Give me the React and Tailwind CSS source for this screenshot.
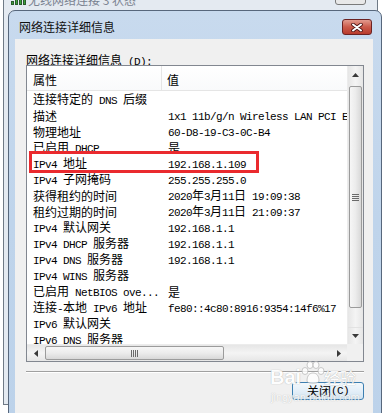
import React from "react";

const CJK = /[\u3000-\u303f\u4e00-\u9fff\uff00-\uffef]/;

function Mixed({ s }) {
  const parts = [];
  let cur = "";
  let curC = null;
  for (const ch of s) {
    const c = CJK.test(ch);
    if (curC === null || c === curC) {
      cur += ch;
      curC = c;
    } else {
      parts.push([cur, curC]);
      cur = ch;
      curC = c;
    }
  }
  if (cur) parts.push([cur, curC]);
  return parts.map(([t, c], i) =>
    c ? (
      <span key={i} className="text-[12px] leading-[14px] align-baseline">{t}</span>
    ) : (
      <span
        key={i}
        className="font-['Liberation_Mono',monospace] text-[11px] leading-[14px] tracking-[-0.6px] whitespace-pre align-baseline"
      >
        {t}
      </span>
    )
  );
}

const rows = [
  ["连接特定的 DNS 后缀", ""],
  ["描述", "1x1 11b/g/n Wireless LAN PCI Express Half Mini Card Adapter"],
  ["物理地址", "60-D8-19-C3-0C-B4"],
  ["已启用 DHCP", "是"],
  ["IPv4 地址", "192.168.1.109"],
  ["IPv4 子网掩码", "255.255.255.0"],
  ["获得租约的时间", "2020年3月11日 19:09:38"],
  ["租约过期的时间", "2020年3月11日 21:09:37"],
  ["IPv4 默认网关", "192.168.1.1"],
  ["IPv4 DHCP 服务器", "192.168.1.1"],
  ["IPv4 DNS 服务器", "192.168.1.1"],
  ["IPv4 WINS 服务器", ""],
  ["已启用 NetBIOS ove...", "是"],
  ["连接-本地 IPv6 地址", "fe80::4c80:8916:9354:14f6%17"],
  ["IPv6 默认网关", ""],
  ["IPv6 DNS 服务器", ""],
];

function Arrow({ dir }) {
  const pts = {
    up: "0,4 3.5,0 7,4",
    down: "0,0 3.5,4 7,0",
    left: "4,0 0,3.5 4,7",
    right: "0,0 4,3.5 0,7",
  }[dir];
  const w = dir === "up" || dir === "down" ? 7 : 4;
  const h = dir === "up" || dir === "down" ? 4 : 7;
  return (
    <svg width={w} height={h} viewBox={`0 0 ${w} ${h}`}>
      <polygon points={pts} fill="#3a3a3a" />
    </svg>
  );
}

function VScroll() {
  return (
    <div className="flex flex-col w-[16px] h-full bg-gradient-to-r from-[#e6e6e6] via-[#f4f4f4] to-[#e6e6e6] border-l border-[#ececec]">
      <div className="h-[17px] flex items-center justify-center">
        <Arrow dir="up" />
      </div>
      <div className="mt-[3px] h-[222px] mx-[1px] rounded-[2px] border border-[#9b9b9b] bg-gradient-to-r from-[#f6f6f6] via-[#ececec] to-[#d8d8d8] flex flex-col items-center justify-center gap-[1px]">
        <div className="w-[7px] h-[1px] bg-[#6a6a6a]" />
        <div className="w-[7px] h-[1px] bg-[#6a6a6a]" />
        <div className="w-[7px] h-[1px] bg-[#6a6a6a]" />
        <div className="w-[7px] h-[1px] bg-[#6a6a6a]" />
      </div>
      <div className="flex-1" />
      <div className="h-[17px] flex items-center justify-center border-t border-[#e2e2e2]">
        <Arrow dir="down" />
      </div>
    </div>
  );
}

function HScroll() {
  return (
    <div className="flex h-[17px] w-full bg-gradient-to-b from-[#e6e6e6] via-[#f4f4f4] to-[#e6e6e6] border-t border-[#ececec]">
      <div className="w-[17px] flex items-center justify-center">
        <Arrow dir="left" />
      </div>
      <div className="ml-[1px] my-[1px] w-[179px] rounded-[2px] border border-[#9b9b9b] bg-gradient-to-b from-[#f6f6f6] via-[#ececec] to-[#d8d8d8] flex items-center justify-center gap-[1px]">
        <div className="w-[1px] h-[7px] bg-[#6a6a6a]" />
        <div className="w-[1px] h-[7px] bg-[#6a6a6a]" />
        <div className="w-[1px] h-[7px] bg-[#6a6a6a]" />
        <div className="w-[1px] h-[7px] bg-[#6a6a6a]" />
      </div>
      <div className="flex-1" />
      <div className="w-[17px] flex items-center justify-center">
        <Arrow dir="right" />
      </div>
    </div>
  );
}

export default function App() {
  return (
    <div className="relative w-[387px] h-[413px] overflow-hidden bg-white font-['Noto_Sans_CJK_SC',sans-serif] text-black">
      {/* back window */}
      <div className="absolute left-[3px] top-[-30px] w-[375px] h-[435px] border border-[#6f7a86] bg-[#e4eaf1]">
        <div className="absolute left-[7px] top-[22px] flex items-end gap-[1px] h-[12px]">
          <div className="w-[3px] h-[4px] bg-[#3aa33a] border border-[#2b5a2b]" />
          <div className="w-[3px] h-[6px] bg-[#3aa33a] border border-[#2b5a2b]" />
          <div className="w-[3px] h-[8px] bg-[#3aa33a] border border-[#2b5a2b]" />
          <div className="w-[3px] h-[10px] bg-[#3aa33a] border border-[#2b5a2b]" />
        </div>
        <div className="absolute left-[24px] top-[21px] text-[12px] leading-[16px] text-[#7a8290]">
          无线网络连接 3 状态
        </div>
        <div className="absolute left-[331px] top-[18px] w-[31px] h-[16px] rounded-[3px] border border-[#7a7a7a] bg-[#e8e8e8]" />
      </div>

      {/* dialog */}
      <div className="absolute left-[8px] top-[10px] w-[374px] h-[420px] rounded-t-[7px] border border-[#57677c] bg-gradient-to-b from-[#c8daee] via-[#bfd4eb] to-[#bcd2ea] flex flex-col">
        {/* title bar */}
        <div className="h-[28px] pt-[4px] flex items-center pl-[10px] pr-[9px]">
          <div className="flex-1 text-[12px] leading-[16px] text-[#111]">网络连接详细信息</div>
          <div className="w-[30px] h-[16px] rounded-[3px] border border-[#6b2222] bg-gradient-to-b from-[#e29a8e] via-[#cb5a4a] to-[#b83a2c] flex items-center justify-center">
            <svg width="12" height="9" viewBox="0 0 12 9">
              <path d="M2 1.5 L10 7.5 M10 1.5 L2 7.5" stroke="#4a1212" strokeWidth="3.6" strokeLinecap="round" />
              <path d="M2 1.5 L10 7.5 M10 1.5 L2 7.5" stroke="#ffffff" strokeWidth="2" strokeLinecap="round" />
            </svg>
          </div>
        </div>

        {/* client area */}
        <div className="flex-1 ml-[6px] mr-[8px] bg-[#f0f0f0] pl-[11px] pr-[9px] pt-[12px] flex flex-col">
          <div className="leading-[14px] h-[14px] whitespace-nowrap">
            <Mixed s="网络连接详细信息 (D):" />
          </div>

          {/* list box */}
          <div className="relative h-[297px] border border-[#828790] bg-white flex">
            <div className="w-[320px] flex flex-col">
              <div className="h-[25px] flex border-b border-[#e5e5e5] bg-gradient-to-b from-white to-[#f9fafb] text-[12px] leading-[16px]">
                <div className="w-[135px] pl-[6px] pt-[6px] border-r border-[#e5e5e5]">属性</div>
                <div className="pl-[5px] pt-[6px]">值</div>
              </div>
              <div className="flex-1 overflow-hidden">
                {rows.map(([k, v], i) => (
                  <div key={i} className="flex h-[16px] leading-[16px] whitespace-nowrap items-center">
                    <div className="w-[135px] pl-[6px] overflow-hidden leading-[14px]">
                      <Mixed s={k} />
                    </div>
                    <div className="pl-[6px] flex-1 overflow-hidden leading-[14px]">
                      <Mixed s={v} />
                    </div>
                  </div>
                ))}
              </div>
              <HScroll />
            </div>
            <div className="w-[16px] flex flex-col">
              <div className="flex-1">
                <VScroll />
              </div>
              <div className="h-[17px] bg-[#f0f0f0]" />
            </div>

            {/* red annotation */}
            <div className="absolute left-[2px] top-[85px] w-[230px] h-[22px] border-[3px] border-[#ea2a2e]" />
          </div>

          {/* separator */}
          <div className="mt-[9px] h-[1px] bg-[#a0a0a0]" />
          <div className="h-[1px] bg-white" />

          {/* button row */}
          <div className="mt-[9px] flex justify-end">
            <div className="w-[72px] h-[18px] rounded-[3px] border border-[#3c7fb1] bg-gradient-to-b from-[#f2f8fc] via-[#e4eff8] to-[#d2e4f2] flex items-center justify-center leading-[14px]">
              <Mixed s="关闭(C)" />
            </div>
          </div>
        </div>
      </div>

      {/* watermark */}
      <div className="absolute left-[270px] top-[366px] text-[20px] leading-[22px] font-['Liberation_Sans',sans-serif] font-bold text-white [text-shadow:0_0_1px_#9a9a9a] opacity-90">
        Bai
      </div>
      <svg className="absolute left-[299px] top-[361px] opacity-80" width="28" height="24" viewBox="0 0 28 24">
        <g fill="#ffffff" stroke="#b0b0b0" strokeWidth="0.8">
          <ellipse cx="6" cy="10" rx="3" ry="3.5" />
          <ellipse cx="11" cy="4" rx="3" ry="3.5" />
          <ellipse cx="17" cy="4" rx="3" ry="3.5" />
          <ellipse cx="22" cy="10" rx="3" ry="3.5" />
          <path d="M8 20 C8 14 11 12 14 12 C17 12 20 14 20 20 C20 23 8 23 8 20 Z" />
        </g>
      </svg>
      <div className="absolute left-[324px] top-[368px] text-[16px] leading-[18px] text-white [text-shadow:0_0_1px_#9a9a9a] opacity-90">
        经验
      </div>
      <div className="absolute left-[271px] top-[391px] text-[11px] leading-[12px] font-['Liberation_Sans',sans-serif] text-white [text-shadow:0_0_1px_#a0a0a0] opacity-80">
        jingyan.baidu.com
      </div>
    </div>
  );
}
